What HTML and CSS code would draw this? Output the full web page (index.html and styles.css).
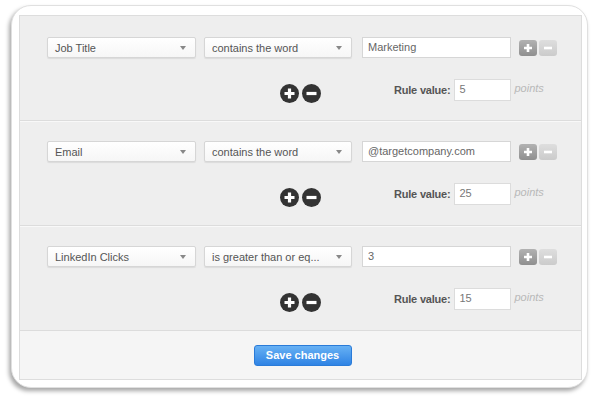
FILE: index.html
```html
<!DOCTYPE html>
<html>
<head>
<meta charset="utf-8">
<link rel="stylesheet" href="styles.css">
</head>
<body>
<div class="frame">
  <div class="panel">
    <div class="rule">
      <div class="row-main">
        <div class="select s1"><span>Job Title</span><i class="arrow"></i></div>
        <div class="select s2"><span>contains the word</span><i class="arrow"></i></div>
        <div class="field">Marketing</div>
        <div class="sq plus"><svg width="18" height="16" viewBox="0 0 18 16"><path d="M9 4v8M5 8h8" stroke="#fff" stroke-width="2.6"/></svg></div>
        <div class="sq minus"><svg width="18" height="16" viewBox="0 0 18 16"><path d="M5 8h8" stroke="#fff" stroke-width="2.6"/></svg></div>
      </div>
      <div class="row-sub">
        <div class="circles">
          <div class="circ"><svg width="19" height="19" viewBox="0 0 19 19"><path d="M9.5 4.5v10M4.5 9.5h10" stroke="#fff" stroke-width="3.2"/></svg></div>
          <div class="circ"><svg width="19" height="19" viewBox="0 0 19 19"><path d="M4.5 9.5h10" stroke="#fff" stroke-width="3.2"/></svg></div>
        </div>
        <div class="value">
          <span class="lbl">Rule value:</span>
          <div class="num">5</div>
          <span class="pts">points</span>
        </div>
      </div>
    </div>
    <div class="rule">
      <div class="row-main">
        <div class="select s1"><span>Email</span><i class="arrow"></i></div>
        <div class="select s2"><span>contains the word</span><i class="arrow"></i></div>
        <div class="field">@targetcompany.com</div>
        <div class="sq plus"><svg width="18" height="16" viewBox="0 0 18 16"><path d="M9 4v8M5 8h8" stroke="#fff" stroke-width="2.6"/></svg></div>
        <div class="sq minus"><svg width="18" height="16" viewBox="0 0 18 16"><path d="M5 8h8" stroke="#fff" stroke-width="2.6"/></svg></div>
      </div>
      <div class="row-sub">
        <div class="circles">
          <div class="circ"><svg width="19" height="19" viewBox="0 0 19 19"><path d="M9.5 4.5v10M4.5 9.5h10" stroke="#fff" stroke-width="3.2"/></svg></div>
          <div class="circ"><svg width="19" height="19" viewBox="0 0 19 19"><path d="M4.5 9.5h10" stroke="#fff" stroke-width="3.2"/></svg></div>
        </div>
        <div class="value">
          <span class="lbl">Rule value:</span>
          <div class="num">25</div>
          <span class="pts">points</span>
        </div>
      </div>
    </div>
    <div class="rule">
      <div class="row-main">
        <div class="select s1"><span>LinkedIn Clicks</span><i class="arrow"></i></div>
        <div class="select s2"><span>is greater than or eq...</span><i class="arrow"></i></div>
        <div class="field">3</div>
        <div class="sq plus"><svg width="18" height="16" viewBox="0 0 18 16"><path d="M9 4v8M5 8h8" stroke="#fff" stroke-width="2.6"/></svg></div>
        <div class="sq minus"><svg width="18" height="16" viewBox="0 0 18 16"><path d="M5 8h8" stroke="#fff" stroke-width="2.6"/></svg></div>
      </div>
      <div class="row-sub">
        <div class="circles">
          <div class="circ"><svg width="19" height="19" viewBox="0 0 19 19"><path d="M9.5 4.5v10M4.5 9.5h10" stroke="#fff" stroke-width="3.2"/></svg></div>
          <div class="circ"><svg width="19" height="19" viewBox="0 0 19 19"><path d="M4.5 9.5h10" stroke="#fff" stroke-width="3.2"/></svg></div>
        </div>
        <div class="value">
          <span class="lbl">Rule value:</span>
          <div class="num">15</div>
          <span class="pts">points</span>
        </div>
      </div>
    </div>
    <div class="footer">
      <div class="save">Save changes</div>
    </div>
  </div>
</div>
</body>
</html>
```

FILE: styles.css
```css
html, body {
  margin: 0;
  padding: 0;
  background: #ffffff;
}
body {
  width: 600px;
  height: 401px;
  overflow: hidden;
  font-family: "Liberation Sans", Arial, sans-serif;
}
.frame {
  margin: 5px 0 0 11px;
  width: 577px;
  height: 383px;
  box-sizing: border-box;
  padding: 9px 5px 7px 7px;
  background: #fff;
  border: 1px solid #e0e0e0;
  border-radius: 20px;
  box-shadow: -2px 3px 4px rgba(0,0,0,0.35);
}
.panel {
  background: #eeeeee;
  border: 1px solid #dddddd;
  height: 100%;
  box-sizing: border-box;
  display: flex;
  flex-direction: column;
}
.rule {
  height: 105px;
  box-sizing: border-box;
  padding: 21px 0 0 27px;
  border-bottom: 1px solid #dcdcdc;
  box-shadow: 0 1px 0 #f8f8f8;
}
.rule + .rule {
  padding-top: 20px;
}
.row-main {
  display: flex;
  align-items: center;
  height: 21px;
}
.select {
  height: 21px;
  box-sizing: border-box;
  background: linear-gradient(#ffffff, #f6f6f6);
  border: 1px solid #d6d6d6;
  border-radius: 2px;
  box-shadow: 0 1px 1px rgba(0,0,0,0.08);
  display: flex;
  align-items: center;
  justify-content: space-between;
  padding: 0 9px 0 7px;
  font-size: 11px;
  color: #555;
}
.s1 { width: 149px; }
.s2 { width: 148px; margin-left: 8px; }
.arrow {
  width: 0;
  height: 0;
  border-left: 3.5px solid transparent;
  border-right: 3.5px solid transparent;
  border-top: 4px solid #888;
}
.field {
  width: 149px;
  height: 21px;
  box-sizing: border-box;
  margin-left: 10px;
  background: #fff;
  border: 1px solid #d6d6d6;
  padding: 0 5px;
  font-size: 11px;
  color: #666;
  line-height: 19px;
}
.sq {
  width: 18px;
  height: 16px;
  border-radius: 3px;
  display: flex;
}
.sq.plus {
  margin-left: 8px;
  background: linear-gradient(#b2b2b2, #8f8f8f);
}
.sq.minus {
  margin-left: 2px;
  background: linear-gradient(#dedede, #cbcbcb);
}
.row-sub {
  display: flex;
  align-items: center;
  margin-top: 21px;
  height: 22px;
}
.circles {
  display: flex;
  gap: 3px;
  margin-left: 233px;
  margin-top: 6px;
}
.circ {
  width: 19px;
  height: 19px;
  border-radius: 50%;
  background: #333;
  display: flex;
}
.value {
  display: flex;
  align-items: center;
  margin-left: 73px;
}
.lbl {
  font-size: 11px;
  font-weight: bold;
  color: #555;
  letter-spacing: -0.2px;
}
.num {
  width: 57px;
  height: 22px;
  box-sizing: border-box;
  margin-left: 3px;
  background: #fff;
  border: 1px solid #dcdcdc;
  padding: 0 5px;
  font-size: 11px;
  color: #777;
  line-height: 18px;
}
.pts {
  margin-left: 4px;
  font-size: 11px;
  font-style: italic;
  color: #b8b8b8;
  margin-top: -4px;
}
.footer {
  flex: 1;
  background: #f5f5f5;
  display: flex;
  justify-content: center;
  padding-top: 14px;
}
.save {
  width: 98px;
  height: 21px;
  box-sizing: border-box;
  border-radius: 3px;
  background: linear-gradient(#67b1f4, #2f83e4);
  border: 1px solid #2a7bd8;
  color: #fff;
  font-size: 11px;
  font-weight: bold;
  text-align: center;
  line-height: 19px;
  margin-left: 4px;
}
```
